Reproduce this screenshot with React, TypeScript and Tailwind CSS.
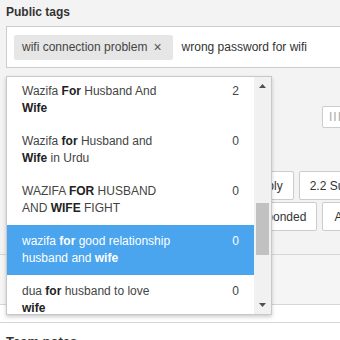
import React from "react";

type Item = { parts: { t: string; b?: boolean }[]; count: number; active?: boolean };

const ITEMS: Item[] = [
  { parts: [{ t: "Wazifa " }, { t: "For", b: true }, { t: " Husband And " }, { t: "Wife", b: true }], count: 2 },
  { parts: [{ t: "Wazifa " }, { t: "for", b: true }, { t: " Husband and " }, { t: "Wife", b: true }, { t: " in Urdu" }], count: 0 },
  { parts: [{ t: "WAZIFA " }, { t: "FOR", b: true }, { t: " HUSBAND AND " }, { t: "WIFE", b: true }, { t: " FIGHT" }], count: 0 },
  {
    parts: [{ t: "wazifa " }, { t: "for", b: true }, { t: " good relationship husband and " }, { t: "wife", b: true }],
    count: 0,
    active: true,
  },
  { parts: [{ t: "dua " }, { t: "for", b: true }, { t: " husband to love " }, { t: "wife", b: true }], count: 0 },
];

export default function App() {
  return (
    <div className="relative w-[340px] h-[340px] overflow-hidden bg-[#f3f3f3] font-['Liberation_Sans',Arial,sans-serif] text-[12px] text-[#444]">
      <div className="px-[6px] pt-[4px]">
        <div className="font-bold text-[#333] h-[16px] leading-[16px]">Public tags</div>
        <div className="mt-[6px] h-[42px] w-[360px] bg-white border border-[#ccc] flex items-center pl-[7px] gap-[9px]">
          <span className="h-[25px] bg-[#e6e6e6] rounded-[2px] flex items-center pl-[8px] pr-[11px] gap-[6px]">
            <span>wifi connection problem</span>
            <span className="text-[14px] text-[#555]">×</span>
          </span>
          <span className="text-[#333]">wrong password for wifi</span>
        </div>
      </div>

      <div className="mt-[38px] flex pl-[322px]">
        <button className="h-[22px] px-[6px] bg-white border border-[#ccc] rounded-[2px] text-[#aaa] tracking-[1px] whitespace-nowrap">
          III
        </button>
      </div>

      <div className="mt-[43px] flex flex-col gap-[2px]">
        <div className="flex gap-[5px] pl-[241px] whitespace-nowrap">
          <button className="h-[29px] px-[10px] bg-white border border-[#ccc] rounded-[2px] text-[#333]">Reply</button>
          <button className="h-[29px] px-[10px] bg-white border border-[#ccc] rounded-[2px] text-[#333]">2.2 Support</button>
        </div>
        <div className="flex gap-[5px] pl-[234px] whitespace-nowrap">
          <button className="h-[29px] px-[10px] bg-white border border-[#ccc] rounded-[2px] text-[#333]">Responded</button>
          <button className="h-[29px] px-[11px] bg-white border border-[#ccc] rounded-[2px] text-[#333]">Archived</button>
        </div>
      </div>

      <div className="mt-[23px] border-t border-[#d6d6d6] h-[50px] bg-[#f5f5f5]" />
      <div className="border-t border-[#d6d6d6] h-[18px] bg-white" />
      <div className="border-t border-[#d6d6d6] bg-white px-[6px] pt-[9px] font-bold text-[#333] text-[13px]">Team notes</div>

      {/* autocomplete dropdown */}
      <div className="absolute left-[6px] top-[76px] w-[266px] h-[239px] bg-white border border-[#c8c8c8] shadow-[0_2px_4px_rgba(0,0,0,0.2)] flex overflow-hidden">
        <div className="flex-1 overflow-hidden">
          <div className="-mt-[2px]">
            {ITEMS.map((it, i) => (
              <div
                key={i}
                className={
                  "h-[50px] flex justify-between pl-[15px] pr-[15px] py-[8px] leading-[17px] " +
                  (it.active ? "bg-[#4aa4ee] text-white" : "text-[#444]")
                }
              >
                <div className="w-[154px]">
                  {it.parts.map((p, j) =>
                    p.b ? (
                      <b key={j} className={it.active ? "text-white" : "text-[#222]"}>
                        {p.t}
                      </b>
                    ) : (
                      <span key={j}>{p.t}</span>
                    ),
                  )}
                </div>
                <div className="w-[10px] text-right">{it.count}</div>
              </div>
            ))}
          </div>
        </div>
        <div className="w-[17px] bg-[#f1f1f1] flex flex-col items-center">
          <svg width="17" height="17" viewBox="0 0 17 17" className="shrink-0">
            <path d="M5 11 L8.5 7 L12 11 Z" fill="#505050" />
          </svg>
          <div className="flex-1 w-full relative">
            <div className="absolute left-[2px] right-[2px] top-[109px] h-[52px] bg-[#c1c1c1]" />
          </div>
          <svg width="17" height="17" viewBox="0 0 17 17" className="shrink-0">
            <path d="M5 6 L12 6 L8.5 10 Z" fill="#505050" />
          </svg>
        </div>
      </div>
    </div>
  );
}
